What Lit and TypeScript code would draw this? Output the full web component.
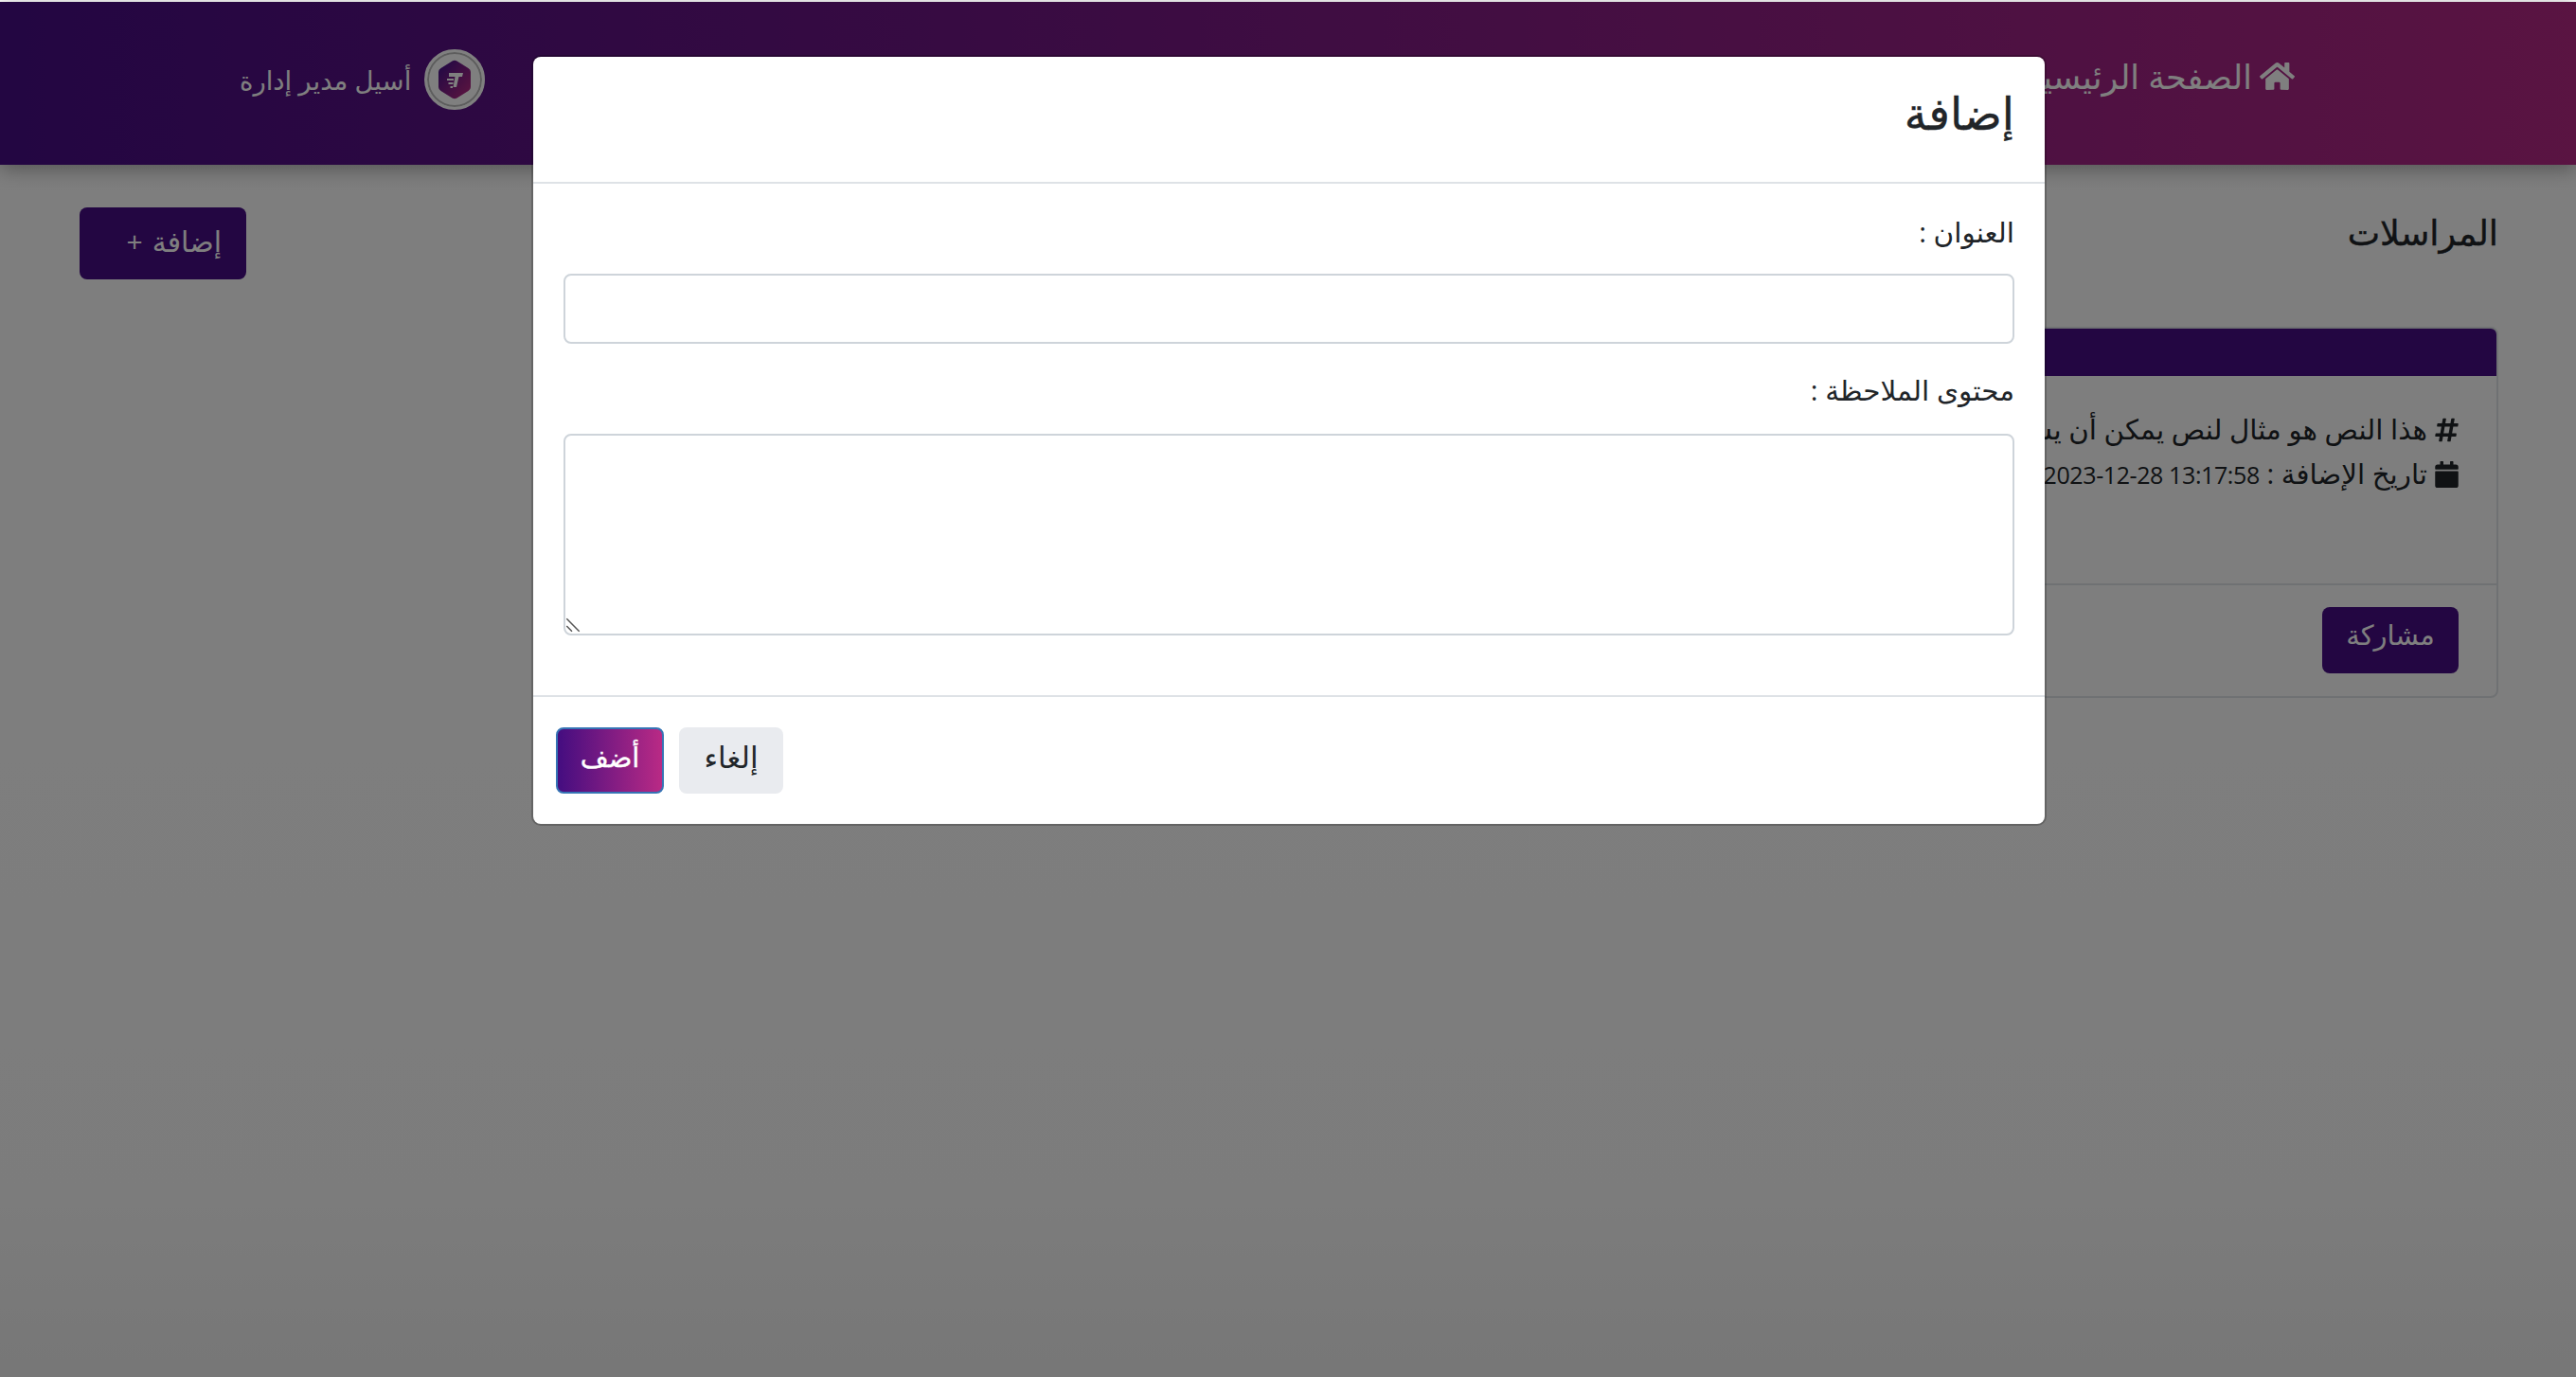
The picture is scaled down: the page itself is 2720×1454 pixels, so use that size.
import { LitElement, html, css } from "lit";
import { customElement } from "lit/decorators.js";

const FONT = css`"Open Sans", "DejaVu Sans", sans-serif`;

@customElement("app-root")
export class AppRoot extends LitElement {
  static styles = css`
    :host {
      display: block;
      position: relative;
      width: 2720px;
      height: 1454px;
      overflow: hidden;
      background: linear-gradient(180deg, #fdfdfd 0, #fcfcfc 800px, #f9f9f9 1254px, #eeeeee 1454px);
      font-family: ${FONT};
      font-size: 28px;
      color: #212529;
    }
    * { box-sizing: border-box; }
    .page { direction: rtl; padding-top: 2px; height: 100%; }
    .nav {
      height: 172px;
      background: linear-gradient(90deg, #460c84, #b42884);
      box-shadow: 0 4px 20px rgba(0,0,0,.35);
      display: flex;
      justify-content: space-between;
      padding: 0 297px 0 253px;
      color: #fff;
    }
    .home { display: flex; align-items: center; gap: 8px; height: 156px; font-size: 35px; }
    .home svg { width: 37px; height: 33px; fill: #fff; flex: none; }
    .user { display: flex; align-items: center; gap: 14px; height: 164px; font-size: 27.500px; }
    .avatar {
      width: 64px; height: 64px; border-radius: 50%;
      background: #fff; border: 3px solid #fff;
      box-shadow: inset 0 0 0 2px #bbb;
      display: flex; align-items: center; justify-content: center;
    }
    .avatar svg { width: 34px; height: 42px; }
    .main { padding: 45px 82px 0 84px; }
    .head { display: flex; justify-content: space-between; align-items: flex-start; height: 126px; }
    h1 { margin: 0; font-size: 36.500px; font-weight: 400; line-height: 52px; -webkit-text-stroke: .4px currentColor; }
    .btn {
      display: inline-flex; align-items: center; justify-content: center;
      border: 0; border-radius: 8px; font: inherit; font-size: 29px;
      background: #460c84; color: #fff; height: 76px; padding: 0 0 5px;
    }
    .add { width: 176px; justify-content: flex-start; padding-right: 26px; gap: 10px; font-size: 30px; }
    .card {
      width: 1100px; height: 392px;
      border: 2px solid #dee2e6; border-radius: 8px;
      display: flex; flex-direction: column;
    }
    .card-top { height: 50px; background: #460c84; border-radius: 6px 6px 0 0; flex: none; }
    .card-body { flex: 1; padding: 33px 40px 0; white-space: nowrap; overflow: hidden; font-size: 29.300px; line-height: 47px; }
    .line { display: flex; align-items: center; gap: 8px; }
    .line svg { width: 25px; height: 28px; fill: #212529; flex: none; }
    .ltr { display: inline-block; direction: ltr; font-size: 25px; letter-spacing: -.4px; }
    .card-foot { height: 119px; flex: none; border-top: 2px solid #dee2e6; padding: 23px 40px; }
    .share { width: 144px; height: 70px; padding-bottom: 13px; }
    .backdrop {
      position: absolute; inset: 2px 0 0 0;
      background: rgba(0,0,0,.5);
      display: flex; justify-content: center; align-items: flex-start;
      padding: 58px 0 0 2px;
      direction: rtl;
    }
    .modal {
      width: 1596px; height: 810px;
      background: #fff; border-radius: 8px;
      box-shadow: 0 0 0 2px rgba(0,0,0,.2);
      display: flex; flex-direction: column;
    }
    .m-head {
      height: 134px; border-bottom: 2px solid #dee2e6;
      padding: 0 32px 16px; display: flex; align-items: center;
      font-size: 47.500px;
      -webkit-text-stroke: .4px currentColor;
    }
    .m-body { flex: 1; padding: 31px 32px 0; font-size: 29.500px; }
    label { display: block; line-height: 40px; }
    .field {
      display: block; width: 100%;
      border: 2px solid #ced4da; border-radius: 8px;
      background: #fff; outline: none; font: inherit;
    }
    input.field { height: 74px; margin: 24px 0 29px; }
    .area { position: relative; margin-top: 26px; }
    textarea.field { height: 213px; resize: none; }
    .grip { position: absolute; left: 2px; bottom: 1px; width: 20px; height: 20px; stroke: #555; stroke-width: 1.500; }
    .m-foot {
      height: 136px; flex: none; border-top: 2px solid #dee2e6;
      padding: 32px 24px; display: flex; justify-content: flex-end; gap: 16px;
    }
    .cancel { width: 110px; height: 70px; background: #e9ebef; color: #212529; font-size: 31px; padding-bottom: 9px; }
    .ok {
      width: 114px; height: 70px; color: #fff;
      background: linear-gradient(90deg, #440d80, #b92a85);
      border: 2px solid #3674b5;
      padding-bottom: 10px;
      -webkit-text-stroke: .4px currentColor;
    }
  `;

  render() {
    return html`
      <div class="page">
        <div class="nav">
          <div class="home">
            <svg viewBox="0 0 576 512"><path d="M280.4 148.3L96 300.1V464a16 16 0 0 0 16 16l112.100-.3a16 16 0 0 0 15.900-16V368a16 16 0 0 1 16-16h64a16 16 0 0 1 16 16v95.600a16 16 0 0 0 16 16.100L464 480a16 16 0 0 0 16-16V300L295.700 148.300a12.200 12.200 0 0 0-15.300 0zM571.600 251.500L488 182.600V44.100a12 12 0 0 0-12-12h-56a12 12 0 0 0-12 12v72.600L318.500 43a48 48 0 0 0-61 0L4.300 251.500a12 12 0 0 0-1.600 16.900l25.500 31A12 12 0 0 0 45.200 301l235.200-193.700a12.200 12.200 0 0 1 15.300 0L530.900 301a12 12 0 0 0 16.900-1.600l25.500-31a12 12 0 0 0-1.700-16.900z"/></svg>
            <span>الصفحة الرئيسية</span>
          </div>
          <div class="user">
            <div class="avatar">
              <svg viewBox="0 0 34 42">
                <defs><linearGradient id="g" x1="0" y1="0" x2="1" y2="1"><stop offset="0" stop-color="#3a0f8a"/><stop offset="1" stop-color="#c02a80"/></linearGradient></defs>
                <path d="M14.500 1.500 Q17 0 19.500 1.500 L31.500 9 Q34 10.500 34 13 V29 Q34 31.500 31.500 33 L19.500 40.500 Q17 42 14.500 40.500 L2.500 33 Q0 31.500 0 29 V13 Q0 10.500 2.500 9 Z" fill="url(#g)"/>
                <path d="M11 14 H26 L25 18 H21.500 L19 29 H15.500 L17.500 18 H11 Z M9 20 h7 v2 h-7 z M10.500 24 h5 v2 h-5 z M12.500 28 h2.500 v2 h-2.500 z" fill="#fff"/>
              </svg>
            </div>
            <span>أسيل مدير إدارة</span>
          </div>
        </div>
        <div class="main">
          <div class="head">
            <h1>المراسلات</h1>
            <button class="btn add"><span>إضافة</span><span>+</span></button>
          </div>
          <div class="card">
            <div class="card-top"></div>
            <div class="card-body">
              <div class="line">
                <svg viewBox="0 0 448 512"><path d="M440.667 182.109l7.143-40c1.313-7.355-4.342-14.109-11.813-14.109h-74.810l14.623-81.891C377.123 38.754 371.468 32 363.997 32h-40.632a12 12 0 0 0-11.813 9.891L296.175 128H197.540l14.623-81.891C213.477 38.754 207.822 32 200.350 32h-40.632a12 12 0 0 0-11.813 9.891L132.528 128H53.432a12 12 0 0 0-11.813 9.891l-7.143 40C33.163 185.246 38.818 192 46.289 192h74.810L98.242 320H19.146a12 12 0 0 0-11.813 9.891l-7.143 40C-1.123 377.246 4.532 384 12.003 384h74.810L72.190 465.891C70.877 473.246 76.532 480 84.003 480h40.632a12 12 0 0 0 11.813-9.891L151.826 384h98.634l-14.623 81.891C234.523 473.246 240.178 480 247.650 480h40.632a12 12 0 0 0 11.813-9.891L315.472 384h79.096a12 12 0 0 0 11.813-9.891l7.143-40c1.313-7.355-4.342-14.109-11.813-14.109h-74.810l22.857-128h79.096a12 12 0 0 0 11.813-9.891zM261.889 320h-98.634l22.857-128h98.634l-22.857 128z"/></svg>
                <span>هذا النص هو مثال لنص يمكن أن يستبدل في نفس المساحة</span>
              </div>
              <div class="line">
                <svg viewBox="0 0 448 512"><path d="M12 192h424a12 12 0 0 1 12 12v260a48 48 0 0 1-48 48H48a48 48 0 0 1-48-48V204a12 12 0 0 1 12-12zm436-44v-36a48 48 0 0 0-48-48h-48V12a12 12 0 0 0-12-12h-40a12 12 0 0 0-12 12v52H160V12a12 12 0 0 0-12-12h-40a12 12 0 0 0-12 12v52H48a48 48 0 0 0-48 48v36a12 12 0 0 0 12 12h424a12 12 0 0 0 12-12z"/></svg>
                <span>تاريخ الإضافة : <span class="ltr">2023-12-28 13:17:58</span></span>
              </div>
            </div>
            <div class="card-foot"><button class="btn share">مشاركة</button></div>
          </div>
        </div>
        <div class="backdrop">
          <div class="modal">
            <div class="m-head">إضافة</div>
            <div class="m-body">
              <label>العنوان :</label>
              <input class="field" />
              <label>محتوى الملاحظة :</label>
              <div class="area">
                <textarea class="field"></textarea>
                <svg class="grip" viewBox="0 0 20 20"><path d="M1.300 3.300 L14.700 16.700 M1.300 11 L7 16.700" fill="none"/></svg>
              </div>
            </div>
            <div class="m-foot">
              <button class="btn cancel">إلغاء</button>
              <button class="btn ok">أضف</button>
            </div>
          </div>
        </div>
      </div>
    `;
  }
}
